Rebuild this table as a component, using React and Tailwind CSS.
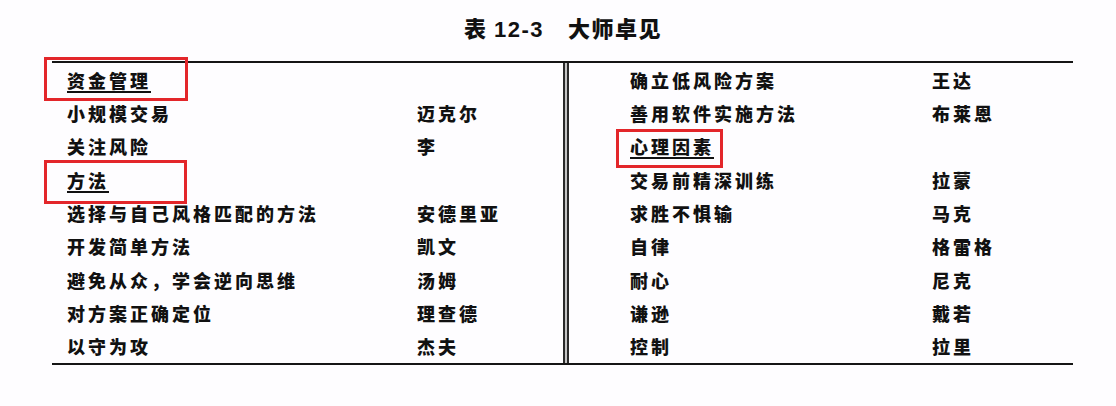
import React from 'react';

const leftRows = [
  { text: '资金管理', head: true },
  { text: '小规模交易', name: '迈克尔' },
  { text: '关注风险', name: '李' },
  { text: '方法', head: true },
  { text: '选择与自己风格匹配的方法', name: '安德里亚' },
  { text: '开发简单方法', name: '凯文' },
  { text: '避免从众，学会逆向思维', name: '汤姆' },
  { text: '对方案正确定位', name: '理查德' },
  { text: '以守为攻', name: '杰夫' },
];

const rightRows = [
  { text: '确立低风险方案', name: '王达' },
  { text: '善用软件实施方法', name: '布莱恩' },
  { text: '心理因素', head: true },
  { text: '交易前精深训练', name: '拉蒙' },
  { text: '求胜不惧输', name: '马克' },
  { text: '自律', name: '格雷格' },
  { text: '耐心', name: '尼克' },
  { text: '谦逊', name: '戴若' },
  { text: '控制', name: '拉里' },
];

function Row({ row, cols }) {
  return (
    <div className={`grid ${cols} h-[33.6px] items-center`}>
      <span
        className={
          row.head
            ? 'underline decoration-[1.5px] underline-offset-[3px]'
            : ''
        }
      >
        {row.text}
      </span>
      <span>{row.name}</span>
    </div>
  );
}

export default function App() {
  return (
    <div
      className="relative w-[1116px] h-[406px] bg-[#fefdff] text-[#111] font-black"
      style={{ fontFamily: '"Noto Sans CJK SC", "Liberation Sans", sans-serif' }}
    >
      {/* title */}
      <div className="h-[61px] flex items-start justify-center pt-[15px] pl-[10px]">
        <span className="text-[22px] leading-[24px] tracking-[1.5px]">
          表 <span className="font-bold" style={{ fontFamily: '"Liberation Sans", sans-serif' }}>12-3</span>
          <span className="inline-block w-[24px]" />
          大师卓见
        </span>
      </div>

      {/* table */}
      <div className="ml-[52px] w-[1021px] border-t-2 border-b-2 border-[#151515] flex">
        <div className="w-[511px] h-[300px] pl-[15px] flex flex-col text-[18px] leading-none tracking-[3px]">
          {leftRows.map((r, i) => (
            <Row key={i} row={r} cols="grid-cols-[350px_1fr]" />
          ))}
        </div>
        <div className="w-[6px] border-l-2 border-r-2 border-[#2a2a2a] bg-[#c4c4c4]" />
        <div className="flex-1 h-[300px] pl-[61px] flex flex-col text-[18px] leading-none tracking-[3px]">
          {rightRows.map((r, i) => (
            <Row key={i} row={r} cols="grid-cols-[302px_1fr]" />
          ))}
        </div>
      </div>

      {/* red annotation boxes */}
      <div className="absolute left-[44px] top-[57px] w-[144px] h-[44px] border-[3px] border-[#e3262a]" />
      <div className="absolute left-[44px] top-[160px] w-[143px] h-[44px] border-[3px] border-[#e3262a]" />
      <div className="absolute left-[616px] top-[129px] w-[107px] h-[39px] border-[3px] border-[#e3262a]" />
    </div>
  );
}
